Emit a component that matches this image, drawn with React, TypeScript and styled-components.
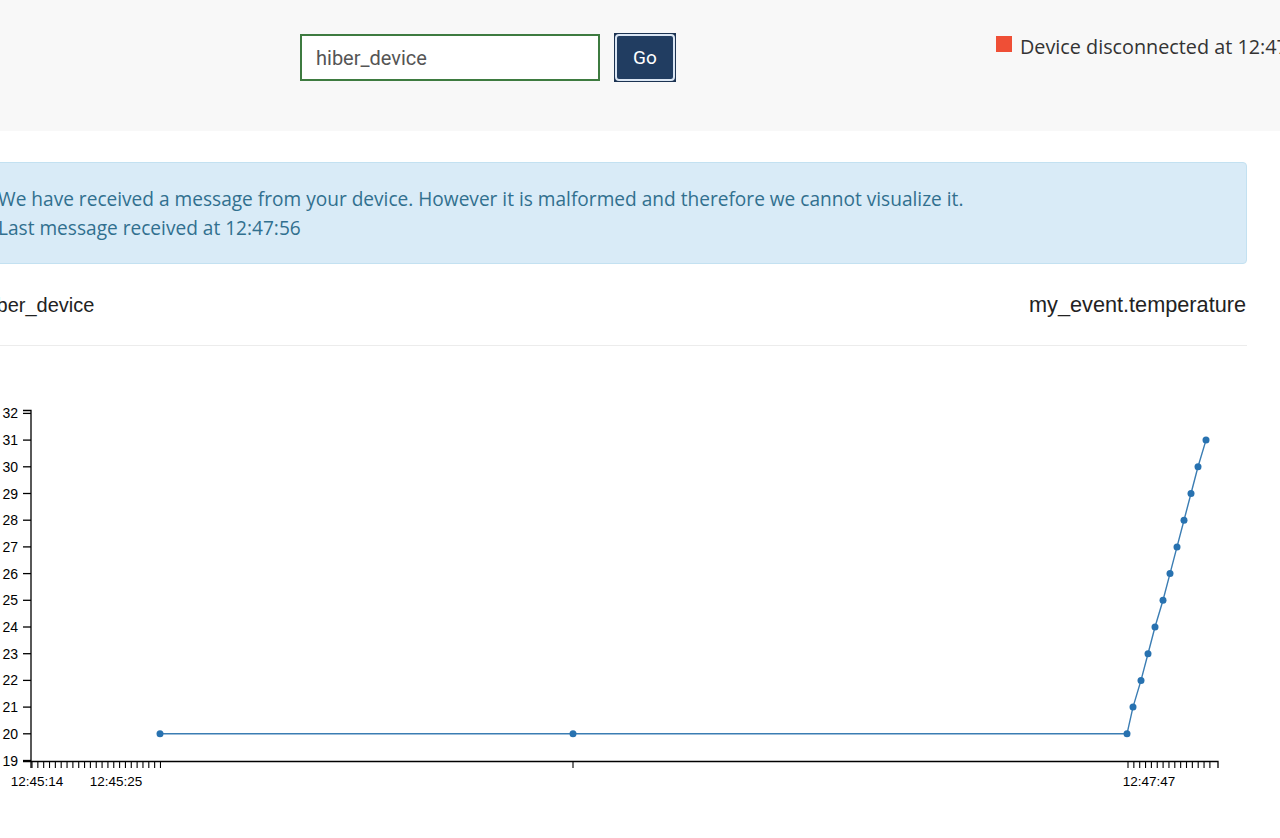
import React from "react";
import styled, { createGlobalStyle } from "styled-components";

const GlobalStyle = createGlobalStyle`
  html, body {
    margin: 0;
    padding: 0;
    background: #ffffff;
    overflow: hidden;
  }
  body {
    font-family: "Open Sans", "Noto Sans", sans-serif;
    color: #333333;
  }
`;

const Page = styled.div`
  width: 1280px;
  height: 838px;
  overflow: hidden;
`;

const Header = styled.header`
  box-sizing: border-box;
  height: 131px;
  background: #f8f8f8;
  padding-top: 33px;
  display: grid;
  grid-template-columns: 300px 696px 1fr;
  overflow: hidden;
`;

const SearchForm = styled.form`
  grid-column: 2;
  display: flex;
  align-items: center;
  gap: 14px;
  height: 49px;
  margin: 0;
`;

const DeviceInput = styled.input`
  box-sizing: border-box;
  width: 300px;
  height: 47px;
  border: 2px solid #3e7b40;
  background: #ffffff;
  padding: 0 14px;
  font-family: "Roboto", "Noto Sans", sans-serif;
  font-size: 20px;
  color: #555555;
  outline: none;
`;

const GoButton = styled.button`
  box-sizing: border-box;
  width: 62px;
  height: 49px;
  padding: 1px;
  border: none;
  background: #1c3352;
  display: flex;
  cursor: pointer;
`;

const GoFace = styled.span`
  flex: 1;
  display: flex;
  align-items: center;
  justify-content: center;
  border: 2px solid #dbe6f3;
  border-radius: 4px;
  background: #213d61;
  color: #ffffff;
  font-family: "Roboto", "Noto Sans", sans-serif;
  font-size: 19px;
`;

const Status = styled.div`
  grid-column: 3;
  display: flex;
  align-items: flex-start;
  gap: 8px;
  white-space: nowrap;
  padding-top: 3px;
`;

const StatusSquare = styled.span<{ $color: string }>`
  flex: none;
  width: 16px;
  height: 16px;
  background: ${(p) => p.$color};
`;

const StatusText = styled.span`
  font-size: 19.8px;
  line-height: 24px;
  margin-top: -1px;
  color: #333333;
`;

const Main = styled.main`
  width: 1266px;
  margin: 31px 0 0 -19px;
`;

const Alert = styled.div`
  box-sizing: border-box;
  background: #d9ebf7;
  border: 1px solid #c3e1f1;
  border-radius: 4px;
  padding: 22px 16px 20px;
  color: #31708f;
  font-size: 19.1px;
  line-height: 29px;
`;

const ChartHeading = styled.div`
  display: flex;
  justify-content: space-between;
  align-items: baseline;
  padding: 28px 1px 0 0;
  height: 53px;
  border-bottom: 1px solid #ececec;
  font-family: "Liberation Sans", Arial, sans-serif;
  color: #222222;
`;

const HeadingText = styled.span<{ $size: number }>`
  font-size: ${(p) => p.$size}px;
`;

const ChartSvg = styled.svg`
  display: block;
`;

const LINE = "#3b7db3";
const DOT = "#2872b0";

const yOf = (v: number) => 761.5 - (v - 19) * 26.7;

const points: [number, number][] = [
  [160, 20],
  [573, 20],
  [1127, 20],
  [1133, 21],
  [1141, 22],
  [1148, 23],
  [1155, 24],
  [1163, 25],
  [1170, 26],
  [1177, 27],
  [1184, 28],
  [1191, 29],
  [1198, 30],
  [1206, 31],
];

const xTicks: number[] = [
  ...Array.from({ length: 23 }, (_, i) => 32 + i * 5.84),
  573,
  ...Array.from({ length: 15 }, (_, i) => 1128 + i * 5.85),
];

const yTicks = Array.from({ length: 14 }, (_, i) => 19 + i);

const xLabels: [number, string][] = [
  [37, "12:45:14"],
  [116, "12:45:25"],
  [1149, "12:47:47"],
];

function Chart() {
  const path = points.map(([x, v], i) => `${i ? "L" : "M"}${x},${yOf(v)}`).join("");
  return (
    <ChartSvg width={1266} height={460} viewBox="-19 347 1266 460">
      <g fontFamily='"Liberation Sans", Arial, sans-serif' fill="#000">
        <path d="M23,411.5H31V762.5H23" fill="none" stroke="#000" strokeWidth={1.3} />
        {yTicks.map((v) => (
          <g key={v}>
            <line x1={23} x2={31} y1={yOf(v)} y2={yOf(v)} stroke="#000" strokeWidth={1.3} />
            <text x={18} y={yOf(v) + 5} fontSize={14} textAnchor="end">
              {v}
            </text>
          </g>
        ))}
        <path d="M31,769V762.5H1218V769" fill="none" stroke="#000" strokeWidth={1.3} />
        {xTicks.map((x, i) => (
          <line key={i} x1={x} x2={x} y1={762.5} y2={769} stroke="#000" strokeWidth={1.1} />
        ))}
        {xLabels.map(([x, t]) => (
          <text key={t} x={x} y={786.5} fontSize={13.5} textAnchor="middle">
            {t}
          </text>
        ))}
      </g>
      <path d={path} fill="none" stroke={LINE} strokeWidth={1.4} />
      {points.map(([x, v], i) => (
        <circle key={i} cx={x} cy={yOf(v)} r={3.5} fill={DOT} />
      ))}
    </ChartSvg>
  );
}

export default function App() {
  return (
    <Page>
      <GlobalStyle />
      <Header>
        <SearchForm onSubmit={(e) => e.preventDefault()}>
          <DeviceInput defaultValue="hiber_device" />
          <GoButton type="submit">
            <GoFace>Go</GoFace>
          </GoButton>
        </SearchForm>
        <Status>
          <StatusSquare $color="#ef4f36" />
          <StatusText>Device disconnected at 12:47:56</StatusText>
        </Status>
      </Header>
      <Main>
        <Alert>
          We have received a message from your device. However it is malformed and therefore we cannot visualize it.
          <br />
          Last message received at 12:47:56
        </Alert>
        <ChartHeading>
          <HeadingText $size={20}>hiber_device</HeadingText>
          <HeadingText $size={21.7}>my_event.temperature</HeadingText>
        </ChartHeading>
        <Chart />
      </Main>
    </Page>
  );
}
